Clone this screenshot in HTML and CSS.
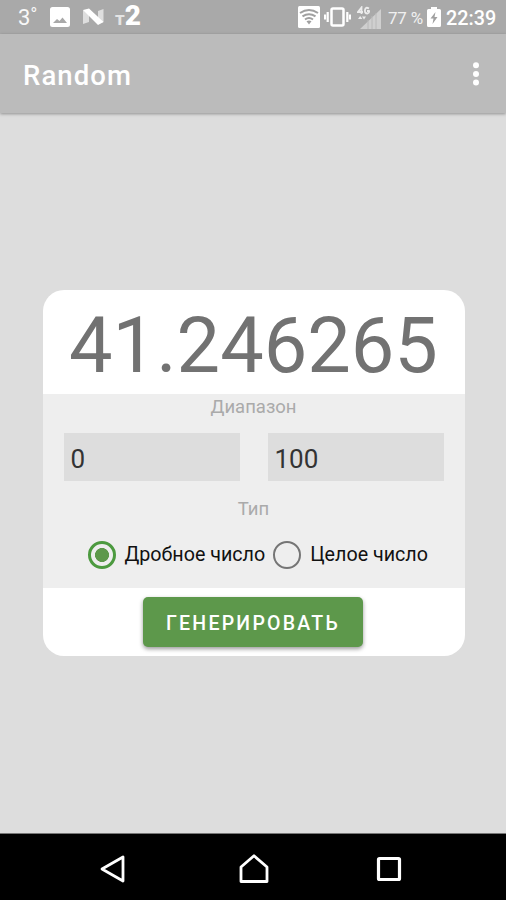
FILE: index.html
```html
<!DOCTYPE html>
<html lang="ru">
<head>
    <meta charset="UTF-8">
    <meta name="viewport" content="width=device-width, initial-scale=1.0">
    <title>Random</title>
    <link rel="stylesheet" href="styles.css">
</head>
<body>
    <!-- status bar -->
    <div class="status">
        <div class="status-left">
            <span class="temp">3˚</span>
            <svg class="ico-img" width="20" height="20" viewBox="0 0 20 20">
                <path fill="#fff" fill-rule="evenodd" d="M2.500 0h15A2.500 2.500 0 0 1 20 2.500v15a2.500 2.500 0 0 1-2.500 2.500h-15A2.500 2.500 0 0 1 0 17.500v-15A2.500 2.500 0 0 1 2.500 0zM3 16h14l-4.500-5.500-3 3.500-2.500-2z"/>
            </svg>
            <svg class="ico-n" width="21" height="18" viewBox="0 0 21 18">
                <path fill="#dedede" d="M0 2l6 3v9l-6 2zM15 3l5.500-2v13l-5.500 2z"/>
                <path fill="#fff" d="M0 2L6 .5 20.500 14 15 17z"/>
            </svg>
            <span class="tele"><span class="tele-t">т</span><span class="tele-2">2</span></span>
        </div>
        <div class="status-right">
            <svg class="ico-wifi" width="22" height="22" viewBox="0 0 22 22">
                <rect width="22" height="22" rx="1.500" fill="#fff"/>
                <g fill="none" stroke="#a0a0a0" stroke-width="2">
                    <path d="M2 7q9-6 18 0M4.500 10.300q6.500-4.300 13 0M7 13.500q4-3 8 0"/>
                </g>
                <path fill="#a0a0a0" d="M8.500 15.200q2.500-1.600 5 0L11 18.500z"/>
            </svg>
            <svg class="ico-vib" width="27" height="20" viewBox="0 0 27 20">
                <rect x="7.500" y="1.500" width="12" height="17" rx="1.500" fill="none" stroke="#fff" stroke-width="2.500"/>
                <path stroke="#fff" stroke-width="2.200" d="M3.700 5v10M23.300 5v10M1 7.500v5M26 7.500v5"/>
            </svg>
            <svg class="ico-signal" width="25" height="23" viewBox="0 0 25 23">
                <path fill="#cfcfcf" d="M24 3v20H3z"/>
                <path stroke="#b8b8b8" stroke-width="1" d="M11 14v9M15 10v13M19 7v16"/>
                <g fill="none" stroke="#ececec" stroke-width="1.800">
                    <path d="M4.500 8V1.500L1 6h5M12 2.500q-3.500-2-4 1.500t2.500 3.500q2-.5 1.500-2.500h-2"/>
                </g>
                <path fill="#ececec" d="M1 13l2.200-3 2.200 3zM5 10.500h4l-2 3z"/>
            </svg>
            <span class="percent">77 %</span>
            <svg class="ico-bat" width="14" height="20" viewBox="0 0 14 20">
                <path fill="#fff" d="M4 0h6v2h2.500A1.500 1.500 0 0 1 14 3.500v15a1.500 1.500 0 0 1-1.500 1.500h-11A1.500 1.500 0 0 1 0 18.500v-15A1.500 1.500 0 0 1 1.500 2H4z"/>
                <path fill="#a0a0a0" d="M8.500 5L3.500 11.500h3L5.500 17l5-7h-3z"/>
            </svg>
            <span class="clock">22:39</span>
        </div>
    </div>

    <!-- app bar -->
    <header class="appbar">
        <h1 class="title">Random</h1>
        <svg width="6" height="24" viewBox="0 0 6 24">
            <g fill="#fff"><circle cx="3" cy="3.300" r="3"/><circle cx="3" cy="12" r="3"/><circle cx="3" cy="20.500" r="3"/></g>
        </svg>
    </header>

    <main class="content">
        <div class="card">
            <div class="result">41.246265</div>
            <div class="settings">
                <div class="label">Диапазон</div>
                <div class="range">
                    <input class="field" type="text" value="0">
                    <input class="field" type="text" value="100">
                </div>
                <div class="label label-type">Тип</div>
                <div class="types">
                    <label class="type"><input class="radio" type="radio" name="type" checked>Дробное число</label>
                    <label class="type"><input class="radio" type="radio" name="type">Целое число</label>
                </div>
            </div>
            <div class="actions">
                <button class="btn">ГЕНЕРИРОВАТЬ</button>
            </div>
        </div>
    </main>

    <!-- navigation buttons -->
    <nav class="navbar">
        <svg width="28" height="30" viewBox="0 0 28 30">
            <path fill="none" stroke="#fff" stroke-width="2.800" stroke-linejoin="round" d="M24 3v24L3 15z"/>
        </svg>
        <svg class="home" width="30" height="30" viewBox="0 0 30 30">
            <path fill="none" stroke="#fff" stroke-width="2.800" stroke-linejoin="round" d="M15 1.800L28 13v14.500H2V13z"/>
        </svg>
        <svg width="26" height="26" viewBox="0 0 26 26">
            <rect x="2.500" y="2.500" width="21" height="21" rx="1" fill="none" stroke="#fff" stroke-width="3.200"/>
        </svg>
    </nav>
</body>
</html>
```
FILE: styles.css
```css
*{
    box-sizing: border-box;
}
html, body{
    margin: 0;
    padding: 0;
}
body{
    display: flex;
    flex-direction: column;
    height: 100vh;
    overflow: hidden;
    background: #ddd;
    font-family: Roboto, "Noto Sans", sans-serif;
}
svg{
    display: block;
    flex: none;
}

/* status bar */
.status{
    display: flex;
    justify-content: space-between;
    flex: none;
    height: 34px;
    padding: 0 10px 0 18px;
    background: #a9a9a9;
    color: #fff;
    line-height: 34px;
    white-space: nowrap;
}
.status-left, .status-right{
    display: flex;
    align-items: center;
}
.temp{
    width: 32px;
    padding-top: 2px;
    font-size: 22px;
    color: #f8f8f8;
}
.ico-n{
    margin-left: 13px;
}
.tele{
    display: flex;
    align-items: baseline;
    margin-left: 11px;
    line-height: 34px;
}
.tele-t{
    font-size: 19px;
    font-weight: 700;
    color: #e4e4e4;
}
.tele-2{
    font-size: 28px;
    font-weight: 900;
}
.ico-vib{
    margin-left: 4px;
}
.ico-signal{
    margin-left: 6px;
}
.percent{
    width: 45px;
    padding: 2px 0 0 6px;
    font-size: 17px;
    letter-spacing: -.2px;
    color: #f0f0f0;
}
.ico-bat{
    margin-right: 5px;
}
.clock{
    width: 50px;
    font-size: 19.800px;
    font-weight: 500;
    padding-top: 3px;
}

/* app bar */
.appbar{
    display: flex;
    justify-content: space-between;
    align-items: center;
    flex: none;
    height: 79px;
    padding: 0 27px 0 23px;
    background: #bbb;
    box-shadow: 0 1px 3px rgba(0,0,0,.35);
}
.title{
    margin: 0;
    padding-top: 4px;
    color: #fff;
    font-size: 27.500px;
    font-weight: 500;
    letter-spacing: 1.100px;
}

/* card */
.content{
    flex: 1;
    display: flex;
    align-items: center;
    justify-content: center;
}
.card{
    width: 422px;
    height: 366px;
    margin-left: 1px;
    border-radius: 21px;
    background: #fff;
    overflow: hidden;
}
.result{
    height: 104px;
    color: #727272;
    font-size: 77.500px;
    line-height: 112px;
    text-align: center;
}
.settings{
    height: 194px;
    padding: 0 21px;
    background: #eee;
}
.label{
    height: 39px;
    color: #aaa;
    font-size: 18.500px;
    line-height: 27px;
    text-align: center;
}
.range{
    display: flex;
    gap: 28px;
}
.field{
    flex: 1;
    min-width: 0;
    height: 48px;
    padding: 3px 7px 0;
    border: 0;
    border-radius: 0;
    background: #ddd;
    color: #333;
    font: 26px Roboto, sans-serif;
}
.label-type{
    padding-top: 15px;
}
.types{
    display: flex;
    gap: 8px;
    margin-top: 20px;
    padding-left: 24px;
}
.type{
    display: flex;
    align-items: center;
    gap: 9px;
    color: #111;
    font-size: 19.700px;
    line-height: 30px;
    white-space: nowrap;
}
.radio{
    appearance: none;
    flex: none;
    width: 28px;
    height: 28px;
    margin: 0;
    border: 2.500px solid #757575;
    border-radius: 50%;
}
.radio:checked{
    border-width: 3px;
    border-color: #4c9a3f;
    background: radial-gradient(circle, #5d984b 6.700px, transparent 7.300px);
}

.actions{
    display: flex;
    justify-content: center;
    padding-top: 9px;
}
.btn{
    width: 220px;
    height: 50px;
    margin-right: 1px;
    padding: 2px 0 0;
    border: 0;
    border-radius: 5px;
    background: #5d984b;
    box-shadow: 0 2px 4px rgba(0,0,0,.4);
    color: #fff;
    font: 500 19.500px Roboto, sans-serif;
    letter-spacing: 2.250px;
}

/* navigation buttons */
.navbar{
    display: flex;
    justify-content: space-between;
    align-items: center;
    flex: none;
    height: 67px;
    padding: 4px 104px 0 99px;
    border-top: 1px solid #777;
    background: #000;
}
.home{
    margin-left: 5px;
}
```
